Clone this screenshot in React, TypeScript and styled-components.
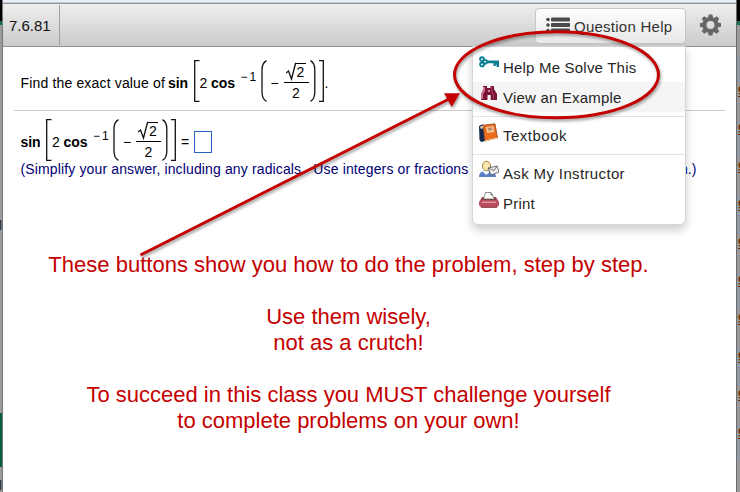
import React from "react";
import styled, { createGlobalStyle } from "styled-components";

const GlobalStyle = createGlobalStyle`
  * { box-sizing: border-box; }
  body { margin: 0; background: #fff; font-family: "Liberation Sans", Arial, sans-serif; }
`;

const Page = styled.div`
  position: relative;
  display: grid;
  grid-template-columns: 3px 733px 4px;
  width: 740px;
  height: 492px;
  overflow: hidden;
`;

const Backdrop = styled.div<{ $edge: "left" | "right" }>`
  display: flex;
  flex-direction: column;
  overflow: hidden;
  background: #9b9b9b;
  ${(p) => (p.$edge === "left" ? "border-right: 1px solid #777;" : "border-left: 1px solid #696969;")}
`;

const Band = styled.div<{ $height: number; $color: string }>`
  flex: none;
  height: ${(p) => p.$height}px;
  background: ${(p) => p.$color};
  overflow: hidden;
`;

const Score = styled.span`
  display: block;
  margin-left: 1px;
  color: #713000;
  font-size: 13px;
  font-weight: 700;
  line-height: 19px;
  text-decoration: underline;
`;

const PageText = styled.span<{ $top: number }>`
  display: block;
  margin: ${(p) => p.$top}px 0 0 -6px;
  color: #333;
  font-size: 15px;
  line-height: 18px;
`;

const Window = styled.main`
  background: #fff;
  min-width: 0;
`;

const TopEdge = styled.div`
  height: 3px;
  background: #e9f0fc;
  border-bottom: 1px solid #c5cbd5;
`;

const Toolbar = styled.header`
  display: flex;
  align-items: center;
  height: 44px;
  padding: 0 15px 1px 0;
  background: linear-gradient(#eee, #cbcbcb);
  border-top: 1px solid #929292;
  border-bottom: 1px solid #929292;
`;

const ExerciseNumber = styled.div`
  width: 57px;
  height: 40px;
  margin-top: 1px;
  padding-left: 6px;
  border-right: 1px solid #a0a0a0;
  font-size: 15px;
  line-height: 41px;
  color: #111;
`;

const HelpButton = styled.button`
  display: flex;
  align-items: center;
  gap: 4px;
  width: 151px;
  height: 36px;
  margin: 2px 13px 0 auto;
  padding: 0 0 0 10px;
  border: 1px solid #c6c6c6;
  border-radius: 4px;
  background: linear-gradient(#fdfdfd, #e8e8e8);
  color: #333;
  font: 15px "Liberation Sans", Arial, sans-serif;
  letter-spacing: 0.25px;
  white-space: nowrap;
`;

const ButtonLabel = styled.span`
  padding-top: 2px;
`;

const Question = styled.section`
  height: 64px;
  margin: 0 11px 0 11px;
  padding: 13px 0 0 6.5px;
  border-bottom: 1px solid #ccc;
`;

const Answer = styled.section`
  height: 141px;
  padding: 8px 0 0 17.5px;
`;

const MathRow = styled.div`
  display: flex;
  align-items: center;
  height: 42px;
  color: #000;
  font-size: 14px;
  line-height: 16px;
  white-space: pre;
`;

const Term = styled.span<{ $width: number; $bold?: boolean; $track?: number }>`
  flex: none;
  width: ${(p) => p.$width}px;
  padding-top: 3px;
  font-weight: ${(p) => (p.$bold ? 700 : 400)};
  letter-spacing: ${(p) => p.$track ?? 0}px;
`;

const Superscript = styled.span`
  flex: none;
  display: flex;
  gap: 2px;
  width: 20px;
  padding-bottom: 9px;
  font-size: 12px;
`;

const Fence = styled.svg`
  flex: none;
  fill: none;
  stroke: #111;
  stroke-width: 1.3;
`;

const Fraction = styled.span`
  flex: none;
  display: flex;
  flex-direction: column;
  align-items: center;
  width: 25px;
  margin-right: 1px;
  padding-top: 3px;
`;

const Numerator = styled.span`
  display: flex;
  width: 100%;
  height: 21px;
  padding-left: 2px;
  border-bottom: 1px solid #000;
`;

const Radicand = styled.span`
  width: 10px;
  height: 18px;
  margin-top: 1px;
  padding-left: 1px;
  border-top: 1px solid #000;
  line-height: 17px;
`;

const Denominator = styled.span`
  height: 20px;
  line-height: 21px;
`;

const AnswerBox = styled.span`
  width: 18px;
  height: 22px;
  margin-top: 4px;
  border: 1px solid #2a62c8;
`;

const Instruction = styled.p`
  margin: 0;
  color: #000075;
  font-size: 14px;
  line-height: 17px;
  letter-spacing: 0.135px;
  white-space: pre;
`;

const Note = styled.div`
  width: 691px;
  height: 240px;
  color: #c40000;
  font-size: 22px;
  line-height: 26px;
  text-align: center;
  white-space: nowrap;
`;

const NoteLine = styled.p<{ $gap?: boolean; $track?: number }>`
  margin: ${(p) => (p.$gap ? 26 : 0)}px 0 0;
  letter-spacing: ${(p) => p.$track ?? 0}px;
`;

const Menu = styled.nav`
  position: absolute;
  left: 472px;
  top: 46px;
  width: 214px;
  height: 179px;
  padding-top: 5px;
  background: #fff;
  border: 1px solid #d6d6d6;
  border-radius: 0 0 6px 6px;
  box-shadow: 0 5px 10px rgba(0, 0, 0, 0.2);
`;

const MenuItem = styled.div<{ $active?: boolean; $track?: number }>`
  display: flex;
  gap: 4px;
  height: 30px;
  padding-left: 6px;
  background: ${(p) => (p.$active ? "#f5f5f5" : "transparent")};
  color: #262626;
  font-size: 15px;
  line-height: 32px;
  letter-spacing: ${(p) => p.$track ?? 0.2}px;
`;

const MenuRule = styled.div`
  height: 1px;
  margin: 4px 0 3px;
  background: #e2e2e2;
`;

const Overlay = styled.svg`
  position: absolute;
  inset: 0;
  pointer-events: none;
  filter: drop-shadow(1px 2px 1.5px rgba(0, 0, 0, 0.4));
`;

const LeftBracket = () => (
  <Fence width="6" height="42"><path d="M5.5 .7H.7V41.3H5.5" /></Fence>
);
const RightBracket = () => (
  <Fence width="6" height="42"><path d="M0 .7H4.3V41.3H0" /></Fence>
);
const LeftParen = () => (
  <Fence width="6" height="42"><path d="M5.5 .6Q1 3 1 10V32Q1 39 5.5 41.4" /></Fence>
);
const RightParen = () => (
  <Fence width="6" height="42"><path d="M.5 .6Q4.8 3 4.8 10V32Q4.8 39 .5 41.4" /></Fence>
);

const Expression = () => (
  <>
    <Term $bold $width={25.5} $track={-0.1}>sin</Term>
    <LeftBracket />
    <Term $width={11.5}>2</Term>
    <Term $bold $width={29.5} $track={-0.1}>cos</Term>
    <Superscript><span>−</span><span>1</span></Superscript>
    <LeftParen />
    <Term $width={17}> −</Term>
    <Fraction>
      <Numerator>
        <Fence width="10" height="20"><path d="M0 11L2.5 9L5.5 17L9.5 1.5H10" /></Fence>
        <Radicand>2</Radicand>
      </Numerator>
      <Denominator>2</Denominator>
    </Fraction>
    <RightParen />
    <Term $width={3}> </Term>
    <RightBracket />
  </>
);

const ListIcon = () => (
  <svg width="24" height="17" viewBox="0 0 24 17" fill="#4a4a4a">
    {[2.5, 8, 13.5].map((y) => (
      <g key={y}><circle cx="2" cy={y} r="1.8" /><rect x="5" y={y - 2} width="19" height="4" rx="1" /></g>
    ))}
  </svg>
);

const GearIcon = () => (
  <svg width="22" height="22" viewBox="-11.5 -11 22 22">
    <circle r="6" fill="none" stroke="#666" strokeWidth="4" />
    {[0, 45, 90, 135, 180, 225, 270, 315].map((a) => (
      <path key={a} d="M-2.7-6.5L-1.8-10.6H1.8L2.7-6.5Z" fill="#666" transform={`rotate(${a})`} />
    ))}
  </svg>
);

const KeyIcon = () => (
  <svg width="20" height="30" viewBox="0 0 20 30">
    <g fill="none" stroke="#0b7f92" strokeWidth="1.9">
      <circle cx="3" cy="7.2" r="1.9" /><circle cx="3" cy="12.4" r="1.9" /><circle cx="6" cy="9.8" r="1.9" />
    </g>
    <path d="M7 8.4H20V15H17.6V12.8H16.7V14H14.4V11.2H7Z" fill="#0b7f92" />
  </svg>
);

const BinocularsIcon = () => (
  <svg width="20" height="30" viewBox="0 0 20 30">
    <path d="M4 4H8V6H11.5V4H15V7L18 12V18H11.7V13H8.5V18H2V12L4 8Z" fill="#7c1235" />
    <path d="M4 5H6V9L4 12V17H2V12L4 8Z" fill="#d17791" />
    <path d="M12 5H13V8L15 13V17H14V13L12 9Z" fill="#a4355c" />
    <rect x="9" y="8" width="2" height="2" fill="#c6809a" />
  </svg>
);

const BookIcon = () => (
  <svg width="20" height="30" viewBox="0 0 20 30">
    <path d="M0 6L4 4L6 21L2 22L.5 20Z" fill="#17294e" />
    <path d="M1 7L4 5L5 8L2 9Z" fill="#e9d7c5" />
    <path d="M4 5.2L16 3.8L18.6 18L6 21Z" fill="#ed6c1b" stroke="#8b4629" strokeWidth=".8" />
    <path d="M7 7L14.5 6L15.3 12L8 13Z" fill="#f8c394" />
    <path d="M9 8.5L13 8M9.2 10L13.2 9.5" stroke="#886044" strokeWidth=".8" />
    <path d="M6 21L18.6 18" stroke="#fae1b5" />
  </svg>
);

const InstructorIcon = () => (
  <svg width="20" height="30" viewBox="0 0 20 30">
    <path d="M0 19Q0 13.5 6 13L10 13Q17 14 17 19Z" fill="#587ec6" />
    <path d="M5 11L9 11L10 15L7 17L4 14Z" fill="#eff1f4" />
    <ellipse cx="7.5" cy="8" rx="4" ry="4.6" fill="#fae8b1" stroke="#a18434" />
    <path d="M9 10L18 8L20 14L12 17Z" fill="#eee" stroke="#555" strokeWidth=".8" />
    <path d="M9 10L15 12.5L18 8" fill="none" stroke="#555" strokeWidth=".8" />
  </svg>
);

const PrinterIcon = () => (
  <svg width="20" height="30" viewBox="0 0 20 30">
    <path d="M3 9H17L20 14V17Q19 19.5 16 19.5H4Q1 19.5 0 17V14Z" fill="#b9505f" />
    <path d="M4 9H16L17 12H3Z" fill="#792c36" />
    <path d="M4.5 11L6.5 4.5H12L15.5 11Z" fill="#fff" stroke="#777" strokeWidth=".8" />
    <path d="M12 4.5V7H14" fill="none" stroke="#666" strokeWidth=".8" />
    <path d="M3 14.3H17" stroke="#e6a3aa" strokeWidth="1.2" />
    <path d="M2 19.3H18" stroke="#8a3d47" />
  </svg>
);

const scoreBands = Array.from({ length: 10 }, (_, i) => i);

export default function App() {
  return (
    <>
      <GlobalStyle />
      <Page>
        <Backdrop $edge="left">
          <Band $height={21} $color="#000" />
          <Band $height={4} $color="#18714d" />
          <Band $height={388} $color="#9b9b9b"><PageText $top={189}>g</PageText></Band>
          <Band $height={54} $color="#00613b" />
          <Band $height={25} $color="#9b9b9b"><PageText $top={7}>g</PageText></Band>
        </Backdrop>
        <Window>
          <TopEdge />
          <Toolbar>
            <ExerciseNumber>7.6.81</ExerciseNumber>
            <HelpButton><ListIcon /><ButtonLabel>Question Help</ButtonLabel></HelpButton>
            <GearIcon />
          </Toolbar>
          <Question>
            <MathRow>
              <Term $width={147.5} $track={0.16}>Find the exact value of</Term>
              <Expression />
              <Term $width={8} $track={0}>.</Term>
            </MathRow>
          </Question>
          <Answer>
            <MathRow>
              <Expression />
              <Term $width={16.5}> =</Term>
              <AnswerBox />
            </MathRow>
            <Instruction>{"(Simplify your answer, including any radicals.  Use integers or fractions for any numbers in the expression.)"}</Instruction>
          </Answer>
          <Note>
            <NoteLine $track={0.02}>These buttons show you how to do the problem, step by step.</NoteLine>
            <NoteLine $gap>Use them wisely,</NoteLine>
            <NoteLine>not as a crutch!</NoteLine>
            <NoteLine $gap>To succeed in this class you MUST challenge yourself</NoteLine>
            <NoteLine>to complete problems on your own!</NoteLine>
          </Note>
        </Window>
        <Backdrop $edge="right">
          <Band $height={21} $color="#000" />
          <Band $height={4} $color="#18714d" />
          <Band $height={32} $color="#9b9b9b" />
          <Band $height={24} $color="#929ba6" />
          {scoreBands.map((i) => (
            <Band key={i} $height={38} $color={i % 2 ? "#929ba6" : "#999"}><Score>9</Score></Band>
          ))}
        </Backdrop>
        <Menu>
          <MenuItem><KeyIcon />Help Me Solve This</MenuItem>
          <MenuItem $active><BinocularsIcon />View an Example</MenuItem>
          <MenuRule />
          <MenuItem $track={0.5}><BookIcon />Textbook</MenuItem>
          <MenuRule />
          <MenuItem $track={0.36}><InstructorIcon />Ask My Instructor</MenuItem>
          <MenuItem><PrinterIcon />Print</MenuItem>
        </Menu>
        <Overlay width="740" height="492">
          <ellipse cx="556.5" cy="74.8" rx="102" ry="43" fill="none" stroke="#c40000" strokeWidth="3" />
          <path d="M140.5 255L449 99" stroke="#c40000" strokeWidth="3" />
          <path d="M460 93.3L444 93.3L451.7 107Z" fill="#c40000" />
        </Overlay>
      </Page>
    </>
  );
}
